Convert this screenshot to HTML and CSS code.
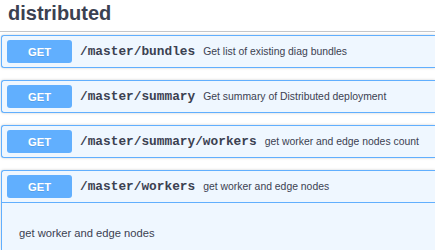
FILE: index.html
```html
<!DOCTYPE html>
<html>
<head>
<meta charset="utf-8">
<link rel="stylesheet" href="styles.css">
</head>
<body>
<div class="section">
  <h4 class="tag">distributed</h4>
  <div class="ops">
    <div class="opblock">
      <div class="summary">
        <span class="method">GET</span>
        <span class="path">/master/bundles</span>
        <span class="desc">Get list of existing diag bundles</span>
      </div>
    </div>
    <div class="opblock">
      <div class="summary">
        <span class="method">GET</span>
        <span class="path">/master/summary</span>
        <span class="desc">Get summary of Distributed deployment</span>
      </div>
    </div>
    <div class="opblock">
      <div class="summary">
        <span class="method">GET</span>
        <span class="path">/master/summary/workers</span>
        <span class="desc">get worker and edge nodes count</span>
      </div>
    </div>
    <div class="opblock open">
      <div class="summary">
        <span class="method">GET</span>
        <span class="path">/master/workers</span>
        <span class="desc">get worker and edge nodes</span>
      </div>
      <div class="body">
        <p class="body-desc">get worker and edge nodes</p>
      </div>
    </div>
  </div>
</div>
</body>
</html>
```

FILE: styles.css
```css
html, body {
  margin: 0;
  padding: 0;
  background: #ffffff;
  overflow: hidden;
}

.section {
  width: 435px;
  height: 250px;
  font-family: "Liberation Sans", Arial, sans-serif;
  color: #3b4151;
}

.tag {
  margin: 0 0 3px 0;
  box-sizing: border-box;
  height: 32px;
  padding: 1px 0 0 8px;
  font-size: 20px;
  line-height: 24px;
  font-weight: 700;
  border-bottom: 1px solid rgba(59, 65, 81, 0.3);
}

.ops {
  padding-left: 1px;
}

.opblock {
  margin: 0 0 12px 0;
  border: 1px solid #61affe;
  border-right: 0;
  border-radius: 3px 0 0 3px;
  background: #eff7ff;
  box-shadow: 0 0 3px rgba(0, 0, 0, 0.19);
}

.opblock.open {
  margin: 0;
  border-bottom: 0;
  border-radius: 3px 0 0 0;
}

.summary {
  display: flex;
  align-items: center;
  padding: 4px 5px;
  white-space: nowrap;
}

.open .summary {
  border-bottom: 1px solid #61affe;
}

.method {
  flex: none;
  width: 65px;
  height: 23px;
  box-sizing: border-box;
  border-radius: 3px;
  background: #61affe;
  color: #ffffff;
  font-size: 11.2px;
  font-weight: 700;
  display: flex;
  align-items: center;
  justify-content: center;
  text-shadow: 0 1px 0 rgba(0, 0, 0, 0.1);
}

.path {
  padding: 0 8px;
  font-family: "Liberation Mono", "Courier New", monospace;
  font-size: 12.8px;
  font-weight: 700;
  color: #3b4151;
}

.desc {
  font-size: 10.4px;
  color: #3b4151;
}

.body {
  box-sizing: border-box;
  height: 47px;
  padding: 23px 17px 0;
}

.body-desc {
  margin: 0;
  font-size: 11.2px;
  line-height: 14px;
}
```
